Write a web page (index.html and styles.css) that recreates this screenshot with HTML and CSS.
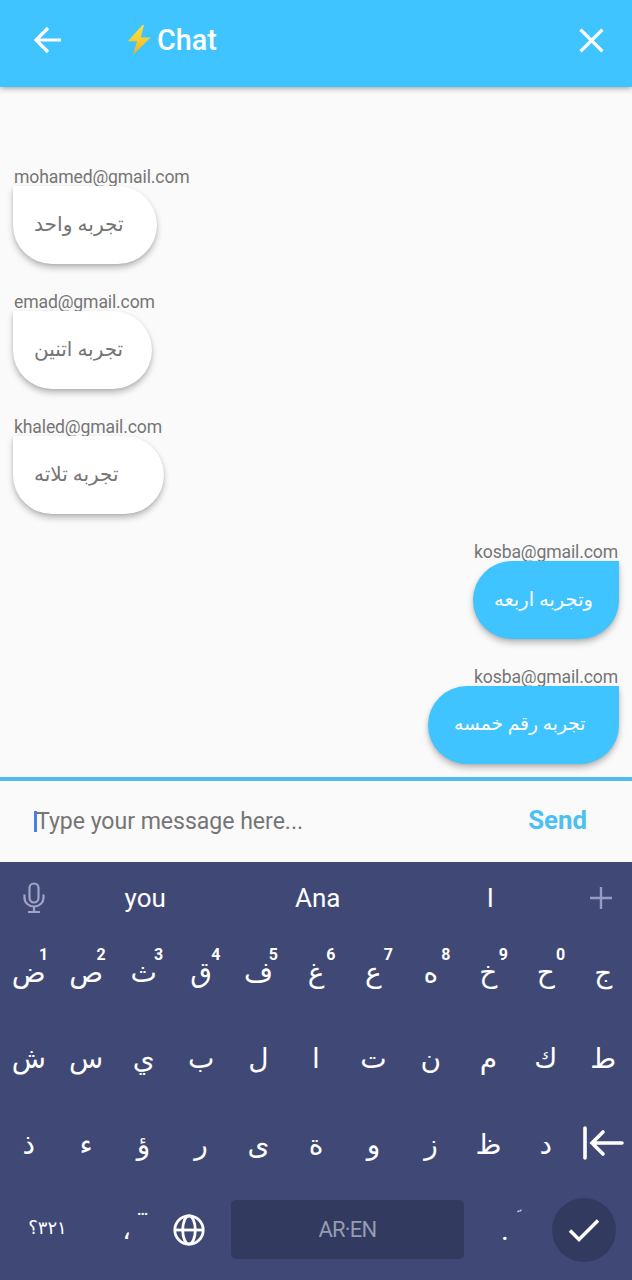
FILE: index.html
```html
<!DOCTYPE html>
<html lang="en">
<head>
<meta charset="utf-8">
<title>Chat</title>
<link rel="stylesheet" href="styles.css">
</head>
<body>
<div class="app">
  <header class="bar">
    <svg class="back" viewBox="0 0 28 28"><path d="M27 14H2M14 2L2 14l12 12" /></svg>
    <h1 class="title">
      <svg class="bolt" viewBox="0 0 24 32"><defs><linearGradient id="g" x1="0" y1="0" x2="0" y2="1"><stop offset="0" stop-color="#f4e23c"/><stop offset=".55" stop-color="#fbcb2d"/><stop offset="1" stop-color="#e8ad2a"/></linearGradient></defs><path fill="url(#g)" d="M15.500 1L.8 17.200h9.200L6 31 23.500 13.600h-9.800L17 1z"/></svg>
      <span>Chat</span>
    </h1>
    <svg class="close" viewBox="0 0 24 24"><path d="M1.500 1.500l21 21M22.500 1.500l-21 21"/></svg>
  </header>

  <main class="messages">
    <article class="message">
      <div class="sender">mohamed@gmail.com</div>
      <div class="bubble w-1"><span>تجربه واحد</span></div>
    </article>
    <article class="message">
      <div class="sender">emad@gmail.com</div>
      <div class="bubble w-2"><span>تجربه اتنين</span></div>
    </article>
    <article class="message">
      <div class="sender">khaled@gmail.com</div>
      <div class="bubble w-3"><span>تجربه تلاته</span></div>
    </article>
    <article class="message mine">
      <div class="sender">kosba@gmail.com</div>
      <div class="bubble w-4"><span>وتجربه اربعه</span></div>
    </article>
    <article class="message mine">
      <div class="sender">kosba@gmail.com</div>
      <div class="bubble w-5"><span>تجربه رقم خمسه</span></div>
    </article>
  </main>

  <div class="composer">
    <div class="field"><i class="caret"></i>Type your message here...</div>
    <div class="send">Send</div>
  </div>

  <section class="keyboard">
    <div class="suggestions">
      <svg class="mic" viewBox="0 0 22 32"><rect x="6.500" y="1.500" width="9" height="19" rx="4.500"/><path d="M1.500 12.500v3.500a9.500 8.500 0 0 0 19 0v-3.500M11 24.500V30M5 30h12"/></svg>
      <span>you</span><span>Ana</span><span>I</span>
      <svg class="plus" viewBox="0 0 24 24"><path d="M1 12h22M12 1v22"/></svg>
    </div>
    <div class="keys">
      <div class="key">ض<sup>1</sup></div><div class="key">ص<sup>2</sup></div><div class="key">ث<sup>3</sup></div><div class="key">ق<sup>4</sup></div><div class="key">ف<sup>5</sup></div><div class="key">غ<sup>6</sup></div><div class="key">ع<sup>7</sup></div><div class="key">ه<sup>8</sup></div><div class="key">خ<sup>9</sup></div><div class="key">ح<sup>0</sup></div><div class="key">ج</div>
      <div class="key">ش</div><div class="key">س</div><div class="key">ي</div><div class="key">ب</div><div class="key">ل</div><div class="key">ا</div><div class="key">ت</div><div class="key">ن</div><div class="key">م</div><div class="key">ك</div><div class="key">ط</div>
      <div class="key">ذ</div><div class="key">ء</div><div class="key">ؤ</div><div class="key">ر</div><div class="key">ى</div><div class="key">ة</div><div class="key">و</div><div class="key">ز</div><div class="key">ظ</div><div class="key">د</div><div class="key"><svg class="delete" viewBox="0 0 42 34"><path d="M3 2v30M40 17H10M21 6L10 17l11 11"/></svg></div>
    </div>
    <div class="bottom">
      <div class="mode">٣٢١؟</div>
      <div class="punct">،<span class="hint">…</span></div>
      <svg class="globe" viewBox="0 0 32 32"><circle cx="16" cy="16" r="14.200"/><ellipse cx="16" cy="16" rx="6.300" ry="14.200"/><path d="M2 16h28"/></svg>
      <div class="space">AR·EN</div>
      <div class="punct period">.<svg class="tashkeel" viewBox="0 0 5 4"><path d="M.5 3.200L2 1.500M2.500 2.500L4.500 .8"/></svg></div>
      <div class="enter"><svg viewBox="0 0 32 24"><path d="M2 12.500l9 9L30 2.500"/></svg></div>
    </div>
  </section>
</div>
</body>
</html>
```
FILE: styles.css
```css
* { box-sizing: border-box; }
body { margin: 0; font-family: Roboto, "DejaVu Sans", sans-serif; }
svg { display: block; fill: none; stroke-linecap: butt; }
.app { width: 632px; height: 1280px; display: flex; flex-direction: column; background: #fafafa; overflow: hidden; }

.bar { height: 87px; flex: none; display: flex; align-items: center; padding: 0 28px 7px 34px; background: #40c4ff; box-shadow: 0 1px 6px rgba(0,0,0,.4); z-index: 1; }
.back { width: 28px; height: 28px; stroke: #fff; stroke-width: 3.2; }
.title { display: flex; align-items: center; gap: 6px; margin: 0 auto 0 65px; color: #fff; font-size: 28.800px; font-weight: 500; line-height: 34px; }
.bolt { width: 24px; height: 32px; }
.close { width: 25px; height: 25px; stroke: #fff; stroke-width: 3.2; }

.messages { height: 690px; flex: none; padding: 80px 13px 0; overflow: hidden; }
.message { height: 125px; display: flex; flex-direction: column; align-items: flex-start; }
.mine { align-items: flex-end; }
.sender { height: 19px; line-height: 20px; font-size: 17.600px; letter-spacing: -.14px; color: #757575; padding: 0 1px; white-space: nowrap; }
.bubble { height: 78px; padding: 0 21px 2px; display: flex; align-items: center; background: #fff; color: #757575; font-size: 19.500px; white-space: nowrap; border-radius: 0 39px 39px 39px; box-shadow: 0 4px 6px rgba(0,0,0,.24), 0 1px 3px rgba(0,0,0,.1); }
.mine .bubble { background: #40c4ff; color: #fff; border-radius: 39px 0 39px 39px; }
.w-1 { width: 144px; font-size: 20.200px; }
.w-2 { width: 139px; font-size: 20px; }
.w-3 { width: 151px; font-size: 20px; }
.w-4 { width: 146px; }
.mine .w-5 { width: 191px; padding-left: 26px; font-size: 18.700px; }

.composer { height: 85px; flex: none; display: flex; justify-content: space-between; align-items: center; padding: 0 45px 2px 34px; border-top: 4px solid #4fbdec; background: #fafafa; position: relative; z-index: 1; }
.field { display: flex; align-items: center; padding-top: 2px; font-size: 23.100px; letter-spacing: -.04px; color: #757575; white-space: nowrap; }
.caret { width: 3px; height: 21px; margin-right: -1px; background: #4a80e0; }
.send { font-size: 25.800px; font-weight: 700; color: #4cc0f0; padding-bottom: 1px; }

.keyboard { flex: 1; background: #404876; color: #fff; }
.suggestions { height: 73px; padding-bottom: 2px; display: grid; grid-template-columns: 59px repeat(3, 172.500px) 1fr; align-items: center; text-align: center; font-size: 26px; }
.mic { width: 22px; height: 32px; margin-left: 23px; stroke: #a0a4cb; stroke-width: 2.200; }
.plus { width: 24px; height: 24px; margin-left: 12px; stroke: #979cc0; stroke-width: 2.400; }
.keys { display: grid; grid-template-columns: repeat(11, 1fr); grid-auto-rows: 86px; }
.key { position: relative; display: flex; align-items: center; justify-content: center; padding-bottom: 11px; font-size: 28px; }
.key sup { position: absolute; left: 39px; top: 11px; font-size: 16px; line-height: 18px; font-weight: 700; }
.delete { width: 42px; height: 34px; margin-bottom: 3px; stroke: #fff; stroke-width: 3.600; stroke-linecap: round; }
.bottom { display: grid; grid-template-columns: 95px 63px 73px 233px 88px 64px; height: 73px; align-items: center; }
.mode { text-align: center; font-size: 18px; padding-bottom: 4px; }
.punct { position: relative; text-align: center; font-size: 27px; }
.period { padding-right: 6px; font-size: 30px; }
.hint { position: absolute; left: 42px; top: -11px; font-size: 15px; line-height: 14px; font-weight: 700; }
.tashkeel { position: absolute; left: 53px; top: -3px; width: 5px; height: 4px; stroke: #d0d3e4; stroke-width: 1.200; }
.globe { width: 32px; height: 32px; margin-left: 15px; stroke: #fff; stroke-width: 2.800; }
.space { height: 59px; border-radius: 5px; background: #323a5f; color: #969bb3; display: flex; align-items: center; justify-content: center; font-size: 22px; letter-spacing: -.8px; }
.enter { width: 64px; height: 64px; border-radius: 50%; background: #323a5f; display: flex; align-items: center; justify-content: center; }
.enter svg { width: 32px; height: 24px; stroke: #fff; stroke-width: 3.500; }
```
